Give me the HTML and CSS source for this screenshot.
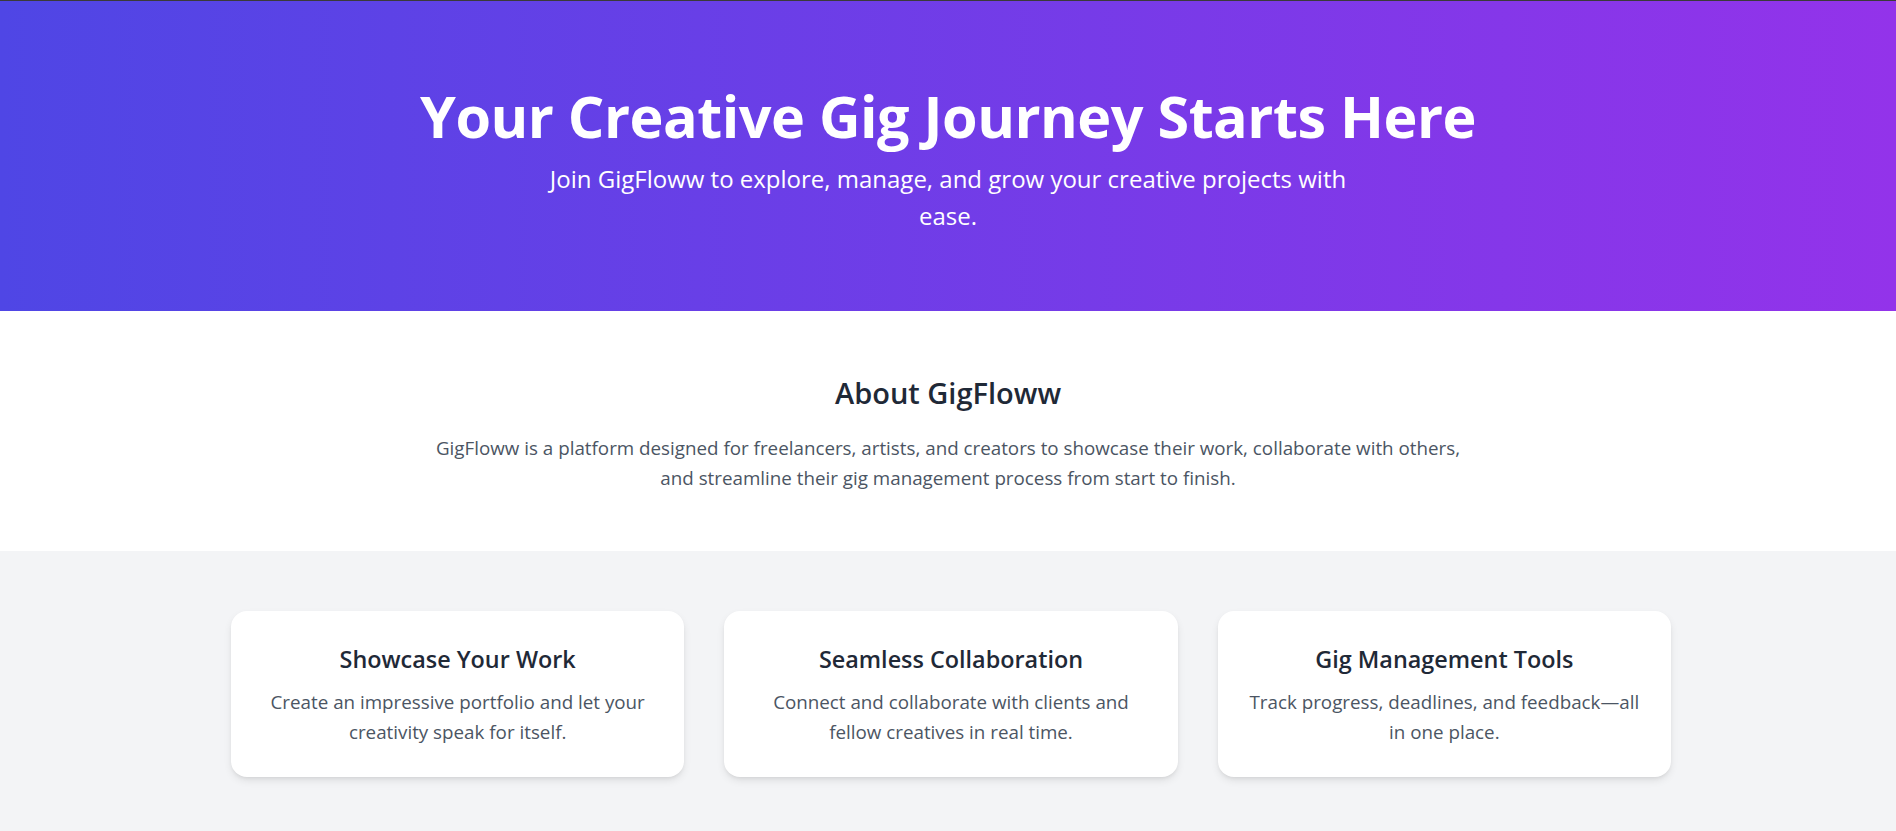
FILE: index.html
```html
<!DOCTYPE html>
<html lang="en">
<head>
<meta charset="utf-8">
<title>GigFloww</title>
<link rel="stylesheet" href="styles.css">
</head>
<body>
  <header class="hero">
    <h1 class="hero-title">Your Creative Gig Journey Starts Here</h1>
    <p class="hero-sub">Join GigFloww to explore, manage, and grow your creative projects with ease.</p>
  </header>
  <section class="about">
    <h2 class="about-title">About GigFloww</h2>
    <p class="about-text">GigFloww is a platform designed for freelancers, artists, and creators to showcase their work, collaborate with others, and streamline their gig management process from start to finish.</p>
  </section>
  <section class="features">
    <div class="cards">
      <div class="card">
        <h3 class="card-title">Showcase Your Work</h3>
        <p class="card-text">Create an impressive portfolio and let your creativity speak for itself.</p>
      </div>
      <div class="card">
        <h3 class="card-title">Seamless Collaboration</h3>
        <p class="card-text">Connect and collaborate with clients and fellow creatives in real time.</p>
      </div>
      <div class="card">
        <h3 class="card-title">Gig Management Tools</h3>
        <p class="card-text">Track progress, deadlines, and <span class="nowrap">feedback—all</span> in one place.</p>
      </div>
    </div>
  </section>
</body>
</html>
```

FILE: styles.css
```css
* { box-sizing: border-box; }
html, body { margin: 0; padding: 0; }
body {
  font-family: "Open Sans", "Noto Sans", "Liberation Sans", sans-serif;
  background: #f3f4f6;
  color: #1f2937;
}
.hero {
  border-top: 1px solid #3a3a3a;
  background: linear-gradient(to right, #4f46e5, #9333ea);
  color: #fff;
  text-align: center;
  padding: 85px 16px 77px;
}
.hero-title {
  margin: 0 0 14px;
  font-size: 57.5px;
  line-height: 60px;
  font-weight: 700;
  letter-spacing: -0.5px;
}
.hero-sub {
  margin: 0 auto;
  max-width: 800px;
  font-size: 24px;
  line-height: 37px;
  font-weight: 400;
}
.about {
  background: #fff;
  text-align: center;
  padding: 64px 16px 58px;
}
.about-title {
  margin: 0 0 22px;
  font-size: 29px;
  line-height: 36px;
  font-weight: 600;
  color: #1f2937;
}
.about-text {
  margin: 0 auto;
  max-width: 1045px;
  font-size: 18.8px;
  line-height: 30px;
  color: #4b5563;
}
.features {
  padding: 60px 16px 60px 22px;
}
.cards {
  max-width: 1440px;
  margin: 0 auto;
  display: grid;
  grid-template-columns: repeat(3, 1fr);
  gap: 40px;
}
.card {
  background: #fff;
  border-radius: 16px;
  box-shadow: 0 4px 8px -1px rgba(0,0,0,0.1), 0 2px 4px -2px rgba(0,0,0,0.1);
  padding: 32px 26px 30px;
  text-align: center;
}
.card-title {
  margin: 0 0 12px;
  font-size: 23.4px;
  line-height: 32px;
  font-weight: 600;
  color: #1f2937;
}
.card-text {
  margin: 0;
  font-size: 18.8px;
  line-height: 30px;
  color: #4b5563;
}
.nowrap { white-space: nowrap; }
```
